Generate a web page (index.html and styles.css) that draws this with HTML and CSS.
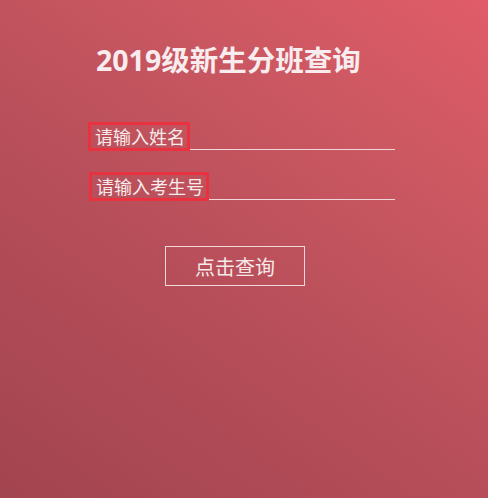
FILE: index.html
```html
<!DOCTYPE html>
<html lang="zh-CN">
<head>
<meta charset="utf-8">
<title>2019级新生分班查询</title>
<link rel="stylesheet" href="styles.css">
</head>
<body>
<main class="page">
  <h1 class="title">2019级新生分班查询</h1>
  <form class="form">
    <div class="row">
      <label class="label">请输入姓名</label>
      <span class="line"></span>
    </div>
    <div class="row">
      <label class="label">请输入考生号</label>
      <span class="line"></span>
    </div>
    <div class="actions">
      <button type="button" class="btn">点击查询</button>
    </div>
  </form>
</main>
</body>
</html>
```

FILE: styles.css
```css
html, body {
  margin: 0;
  padding: 0;
  height: 100%;
}
body {
  background: linear-gradient(35deg, #a2444f 0%, #b84f5a 45%, #cc5862 75%, #e05c68 100%);
  font-family: "Noto Sans", "Noto Sans CJK SC", sans-serif;
  color: #f7e9ea;
}
.page {
  padding: 40px 0 0 88px;
  width: 307px;
}
.title {
  margin: 0 0 0 8px;
  font-size: 28.5px;
  line-height: 40px;
  font-weight: 700;
  color: #f8ecee;
}
.form {
  margin-top: 42px;
  display: flex;
  flex-direction: column;
  gap: 21px;
}
.row {
  display: flex;
  align-items: flex-end;
}
.row + .row {
  padding-left: 1px;
}
.label {
  border: 3px solid #e9323f;
  padding: 0 2px 0 4px;
  font-family: "Noto Sans CJK SC", sans-serif;
  font-size: 18px;
  line-height: 23px;
  color: #f7eaeb;
  white-space: nowrap;
}
.line {
  flex: 1;
  border-bottom: 1px solid #efd6d8;
  margin-bottom: 1px;
}
.actions {
  margin-top: 24px;
  padding-left: 77px;
}
.btn {
  width: 140px;
  height: 40px;
  background: transparent;
  border: 1px solid #f0d9db;
  color: #f7e9ea;
  font-family: "Noto Sans CJK SC", sans-serif;
  font-size: 20px;
  padding: 0;
  cursor: pointer;
}
```
